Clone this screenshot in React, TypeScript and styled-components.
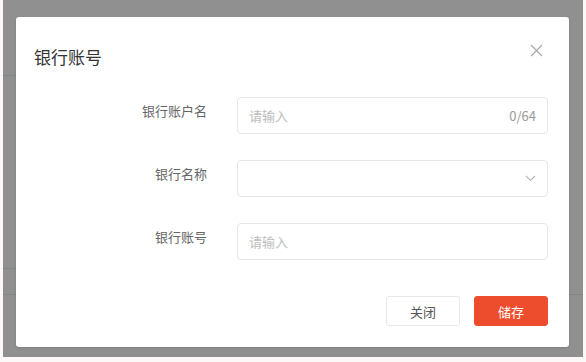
import React from "react";
import styled, { createGlobalStyle } from "styled-components";

const Global = createGlobalStyle`
  html, body { margin: 0; padding: 0; background: #fcf8f8; }
  body { font-family: "Noto Sans CJK SC", "Noto Sans", sans-serif; }
  * { box-sizing: border-box; }
`;

const Frame = styled.div`
  position: relative;
  margin-left: 3px;
  width: 580px;
  height: 357px;
  overflow: hidden;
`;

const Page = styled.div`
  background: #ffffff;
  height: 100%;
  display: flex;
  flex-direction: column;
`;

const PageRow = styled.div<{ $h: number; $ruleWidth?: string }>`
  height: ${(p) => p.$h}px;
  flex: none;
  display: flex;
  align-items: flex-end;
  &::after {
    content: "";
    display: block;
    width: ${(p) => p.$ruleWidth ?? "100%"};
    height: 1px;
    background: #ececec;
  }
`;

const Overlay = styled.div`
  position: absolute;
  inset: 0;
  background: rgba(0, 0, 0, 0.435);
  padding: 17px 0 0 13px;
`;

const Modal = styled.div`
  width: 553px;
  height: 330px;
  background: #fff;
  border-radius: 3px;
  box-shadow: 0 1px 3px rgba(0, 0, 0, 0.12);
  padding: 28px 21px 21px 18px;
  display: flex;
  flex-direction: column;
`;

const Header = styled.div`
  display: flex;
  align-items: center;
  justify-content: space-between;
  height: 24px;
`;

const Title = styled.div`
  font-size: 17px;
  line-height: 24px;
  color: #333;
`;

const CloseBtn = styled.button`
  border: none;
  background: none;
  padding: 0;
  margin-right: 2px;
  margin-top: -13px;
  width: 20px;
  height: 20px;
  display: flex;
  align-items: center;
  justify-content: center;
  cursor: pointer;
`;

const Form = styled.div`
  margin-top: 28px;
  display: flex;
  flex-direction: column;
  gap: 26px;
`;

const Row = styled.div`
  display: grid;
  grid-template-columns: 173px 311px;
  column-gap: 30px;
`;

const Label = styled.div`
  text-align: right;
  font-size: 13px;
  line-height: 20px;
  padding-top: 4px;
  color: #666;
`;

const Field = styled.div`
  height: 37px;
  border: 1px solid #e6e6e6;
  border-radius: 4px;
  display: flex;
  align-items: center;
  padding: 0 11px 0 11px;
  font-size: 13px;
`;

const Placeholder = styled.span`
  flex: 1;
  color: #bcbcbc;
`;

const Counter = styled.span`
  color: #999;
`;

const Footer = styled.div`
  margin-top: auto;
  display: flex;
  justify-content: flex-end;
  gap: 14px;
`;

const Button = styled.button<{ $primary?: boolean }>`
  width: 74px;
  height: 30px;
  border-radius: 3px;
  font-family: "Noto Sans CJK SC", "Noto Sans", sans-serif;
  font-size: 13px;
  border: 1px solid ${(p) => (p.$primary ? "#ee4d2d" : "#e8e8e8")};
  background: ${(p) => (p.$primary ? "#ee4d2d" : "#fff")};
  color: ${(p) => (p.$primary ? "#fff" : "#555")};
  cursor: pointer;
`;

const CloseIcon = () => (
  <svg width="13" height="13" viewBox="0 0 13 13">
    <path d="M1 1L12 12M12 1L1 12" stroke="#a6a6a6" strokeWidth="1.1" fill="none" />
  </svg>
);

const Chevron = () => (
  <svg width="11" height="7" viewBox="0 0 11 7">
    <path d="M1 1L5.5 5.5L10 1" stroke="#b5b5b5" strokeWidth="1.1" fill="none" />
  </svg>
);

export default function App() {
  return (
    <>
      <Global />
      <Frame>
        <Page>
          <PageRow $h={76} $ruleWidth="40px" />
          <PageRow $h={193} $ruleWidth="40px" />
          <PageRow $h={26} />
        </Page>
        <Overlay>
          <Modal>
            <Header>
              <Title>银行账号</Title>
              <CloseBtn aria-label="close">
                <CloseIcon />
              </CloseBtn>
            </Header>
            <Form>
              <Row>
                <Label>银行账户名</Label>
                <Field>
                  <Placeholder>请输入</Placeholder>
                  <Counter>0/64</Counter>
                </Field>
              </Row>
              <Row>
                <Label>银行名称</Label>
                <Field>
                  <Placeholder />
                  <Chevron />
                </Field>
              </Row>
              <Row>
                <Label>银行账号</Label>
                <Field>
                  <Placeholder>请输入</Placeholder>
                </Field>
              </Row>
            </Form>
            <Footer>
              <Button>关闭</Button>
              <Button $primary>储存</Button>
            </Footer>
          </Modal>
        </Overlay>
      </Frame>
    </>
  );
}
